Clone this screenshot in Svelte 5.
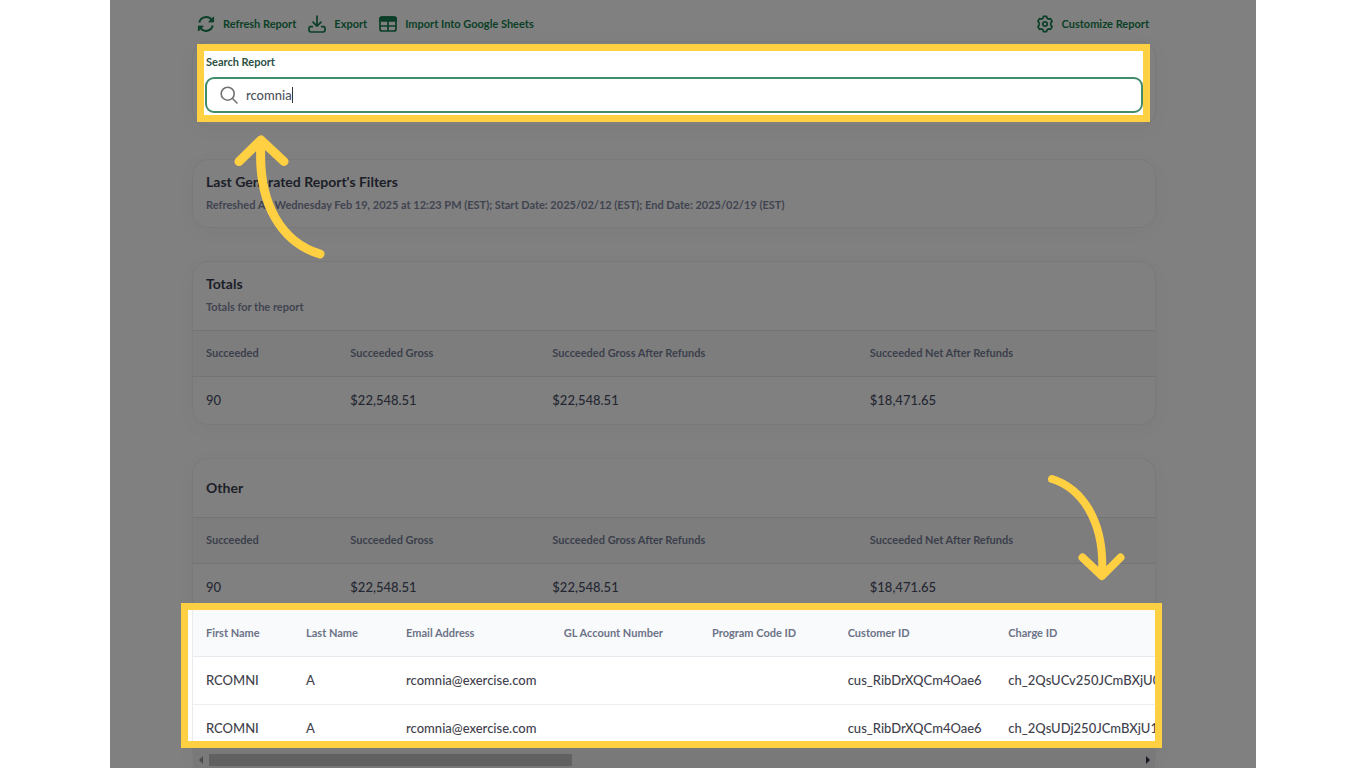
<script>
  let query = $state('rcomnia');

  const totalsHead = ['Succeeded', 'Succeeded Gross', 'Succeeded Gross After Refunds', 'Succeeded Net After Refunds'];
  const totalsRow = ['90', '$22,548.51', '$22,548.51', '$18,471.65'];

  const detailHead = ['First Name', 'Last Name', 'Email Address', 'GL Account Number', 'Program Code ID', 'Customer ID', 'Charge ID'];
  const detailRows = [
    ['RCOMNI', 'A', 'rcomnia@exercise.com', '', '', 'cus_RibDrXQCm4Oae6', 'ch_2QsUCv250JCmBXjU0'],
    ['RCOMNI', 'A', 'rcomnia@exercise.com', '', '', 'cus_RibDrXQCm4Oae6', 'ch_2QsUDj250JCmBXjU18']
  ];
</script>

{#snippet totalsTable(label)}
  <table class="totals" aria-label={label}>
    <thead>
      <tr>{#each totalsHead as h}<th scope="col">{h}</th>{/each}</tr>
    </thead>
    <tbody>
      <tr>{#each totalsRow as c}<td>{c}</td>{/each}</tr>
    </tbody>
  </table>
{/snippet}

<div class="page">
  <main class="panel">
    <nav class="toolbar">
      <button type="button">
        <svg class="icon" viewBox="0 0 18 18" fill="none" stroke="currentColor" stroke-width="2">
          <path d="M2.3 7.4A6.9 6.9 0 0 1 14.6 5M15.7 10.6A6.9 6.9 0 0 1 3.4 13" />
          <path d="M16.6 2v4.9h-4.9zM1.4 16v-4.9h4.9z" fill="currentColor" stroke-width="1" stroke-linejoin="round" />
        </svg>
        Refresh Report
      </button>
      <button type="button">
        <svg class="icon" viewBox="0 0 18 18" fill="none" stroke="currentColor" stroke-width="1.7" stroke-linecap="round" stroke-linejoin="round">
          <path d="M9 1v10M5 7.2 9 11.2l4-4" />
          <path d="M4.4 11.6H2.6a1.6 1.6 0 0 0-1.6 1.6v1.9A1.9 1.9 0 0 0 2.9 17h12.2a1.9 1.9 0 0 0 1.9-1.9v-1.9a1.6 1.6 0 0 0-1.6-1.6h-1.8" />
        </svg>
        Export
      </button>
      <button type="button">
        <svg class="icon" viewBox="0 0 18 18" fill="none" stroke="currentColor" stroke-width="1.7">
          <rect x="1" y="2" width="16" height="14" rx="2" />
          <path d="M1 3.9a1.9 1.9 0 0 1 1.9-1.9h12.2a1.9 1.9 0 0 1 1.9 1.9V6H1z" fill="currentColor" />
          <path d="M1 11h16M9 6v10" />
        </svg>
        Import Into Google Sheets
      </button>
      <button type="button" class="customize">
        <svg class="icon" viewBox="0 0 18 18" fill="none" stroke="currentColor" stroke-width="1.7" stroke-linejoin="round">
          <path d="M7.4 1.4h3.2l.6 2 1.2.7 2.1-.5 1.6 2.8-1.4 1.6v2l1.4 1.6-1.6 2.8-2.1-.5-1.2.7-.6 2H7.4l-.6-2-1.2-.7-2.1.5-1.6-2.8L3.3 10V8L1.9 6.4l1.6-2.8 2.1.5 1.2-.7z" />
          <circle cx="9" cy="9" r="2.2" />
        </svg>
        Customize Report
      </button>
    </nav>

    <section class="card search-card">
      <div class="spotlight search">
        <label for="search">Search Report</label>
        <div class="field">
          <svg class="icon" viewBox="0 0 18 18" fill="none" stroke="currentColor" stroke-width="1.6" stroke-linecap="round">
            <circle cx="7.7" cy="7.7" r="6.5" />
            <path d="m12.5 12.5 4.5 4.5" />
          </svg>
          <input id="search" type="text" bind:value={query} /><span class="caret"></span>
        </div>
      </div>
    </section>

    <section class="card filters">
      <h2>Last Generated Report's Filters</h2>
      <p>Refreshed At: Wednesday Feb 19, 2025 at 12:23 PM (EST); Start Date: 2025/02/12 (EST); End Date: 2025/02/19 (EST)</p>
      <svg class="arrow up" viewBox="0 0 100 130" aria-hidden="true">
        <path d="M90 120C53 109 27 71 31 9M9 27.500 31 6l23 21.500" />
      </svg>
    </section>

    <section class="card">
      <header class="head">
        <h2>Totals</h2>
        <p>Totals for the report</p>
      </header>
      {@render totalsTable('Totals')}
    </section>

    <section class="card other">
      <header class="head short"><h2>Other</h2></header>
      {@render totalsTable('Other')}
      <svg class="arrow down" viewBox="0 0 90 120" aria-hidden="true">
        <path d="M16 13C45 22 69 54 66 108M46.500 91.500 66 110l18.500-18.500" />
      </svg>
      <div class="spotlight details">
        <div class="clip">
          <table aria-label="Transactions">
            <thead>
              <tr>{#each detailHead as h}<th scope="col">{h}</th>{/each}</tr>
            </thead>
            <tbody>
              {#each detailRows as row}
                <tr>{#each row as c}<td>{c}</td>{/each}</tr>
              {/each}
            </tbody>
          </table>
        </div>
      </div>
      <div class="scrollbar">
        <svg viewBox="0 0 4 8"><path d="M4 0v8L0 4z" /></svg>
        <div class="track"><div class="thumb"></div></div>
        <svg class="right" viewBox="0 0 4 8"><path d="M0 0v8l4-4z" /></svg>
      </div>
    </section>
  </main>
</div>

<style>
  :global(body) {
    margin: 0;
    background: #fff;
  }
  .page {
    box-sizing: border-box;
    min-height: 100vh;
    padding: 0 110px;
    font-family: Lato, "Liberation Sans", sans-serif;
    font-size: 11px;
    line-height: 18px;
  }
  .panel {
    box-sizing: border-box;
    min-height: 100vh;
    padding: 0 100px 0 82px;
    background: #808080;
    overflow: hidden;
  }
  .toolbar {
    display: flex;
    align-items: center;
    gap: 12px;
    height: 41px;
    padding: 6px 7px 0 5px;
    box-sizing: border-box;
  }
  .toolbar button {
    display: flex;
    align-items: center;
    gap: 8px;
    padding: 0;
    border: 0;
    background: none;
    color: #0b3f27;
    font: inherit;
    font-weight: 700;
    cursor: pointer;
  }
  .toolbar .customize {
    margin-left: auto;
  }
  .icon {
    width: 18px;
    height: 18px;
    flex: none;
  }
  .card {
    position: relative;
    margin-bottom: 33px;
    border: 1px solid #797979;
    border-radius: 16px;
    box-shadow: 0 4px 20px rgba(0, 0, 0, 0.03);
  }
  .search-card {
    padding: 2px 5px 3px 4px;
  }
  .spotlight {
    border: 7px solid #ffd042;
    background: #fff;
  }
  .search {
    padding: 2px 0 2px 1px;
  }
  .search label {
    display: block;
    padding: 0 1px 6px;
    color: #2c4f43;
    font-weight: 700;
  }
  .field {
    display: flex;
    align-items: center;
    height: 32px;
    padding: 0 13px;
    border: 2px solid #418c69;
    border-radius: 9px;
    color: #6f7175;
  }
  .field input {
    field-sizing: content;
    margin-left: 8px;
    padding: 0;
    border: 0;
    outline: 0;
    background: none;
    color: #50535e;
    font: inherit;
    font-size: 13px;
    font-weight: 500;
  }
  .caret {
    width: 1px;
    height: 16px;
    background: #33353c;
  }
  h2 {
    margin: 0;
    color: #1b1e28;
    font-size: 14px;
    line-height: 20px;
    font-weight: 700;
  }
  p {
    margin: 0;
    padding-top: 4px;
    color: #404450;
    font-weight: 700;
    white-space: nowrap;
  }
  .filters,
  .head {
    padding: 12px 13px 13px;
  }
  .head {
    padding-bottom: 14px;
  }
  .head.short {
    padding: 19px 13px;
  }
  table {
    width: 100%;
    border-collapse: separate;
    border-spacing: 0;
    table-layout: fixed;
  }
  th,
  td {
    box-sizing: border-box;
    padding: 14px 0 14px 13px;
    text-align: left;
    font-weight: 500;
    white-space: nowrap;
  }
  th {
    border-top: 1px solid #747475;
    border-bottom: 1px solid #747475;
    background: #7d7d7e;
    color: #3b3f4b;
    font-weight: 700;
    padding-top: 13px;
  }
  td {
    color: #252833;
    font-size: 13px;
  }
  .totals td {
    padding-bottom: 15px;
  }
  .totals th:nth-child(1) {
    width: 15%;
  }
  .totals th:nth-child(2) {
    width: 21%;
  }
  .totals th:nth-child(3) {
    width: 33%;
  }
  .other {
    margin-bottom: 0;
    border-bottom: 0;
  }
  .other .totals td {
    padding-bottom: 7px;
  }
  .details {
    margin: 0 -7px 0 -12px;
    padding-left: 4px;
    position: relative;
  }
  .clip {
    overflow: hidden;
    border-left: 1px solid #e9ebef;
  }
  .details th {
    border-top: 0;
    border-bottom-color: #e6e9ed;
    background: #f9fafc;
    color: #6c7387;
    padding-top: 14px;
  }
  .details td {
    padding-bottom: 15px;
    border-bottom: 1px solid #eceef1;
    color: #3f424d;
  }
  .details tr:last-child td {
    padding-bottom: 4px;
    border-bottom: 0;
  }
  .details th:nth-child(1),
  .details th:nth-child(2) {
    width: 10.4%;
  }
  .details th:nth-child(3) {
    width: 16.4%;
  }
  .details th:nth-child(4) {
    width: 15.4%;
  }
  .details th:nth-child(5) {
    width: 14.1%;
  }
  .details th:nth-child(6) {
    width: 16.7%;
  }
  .scrollbar {
    display: flex;
    align-items: center;
    gap: 6px;
    height: 14px;
    padding: 5px 5px 1px 6px;
    background: #797979;
  }
  .scrollbar svg {
    width: 4px;
    height: 8px;
    fill: #4a4a4a;
  }
  .scrollbar .right {
    fill: #161a22;
  }
  .track {
    flex: 1;
  }
  .thumb {
    width: 39%;
    height: 12px;
    background: #616161;
  }
  .arrow {
    position: absolute;
    z-index: 1;
    fill: none;
    stroke: #ffd042;
    stroke-linecap: round;
    stroke-linejoin: round;
  }
  .up {
    left: 37px;
    top: -26px;
    width: 100px;
    height: 130px;
    stroke-width: 9;
  }
  .down {
    right: 29px;
    top: 7px;
    width: 90px;
    height: 120px;
    stroke-width: 8;
  }
</style>
